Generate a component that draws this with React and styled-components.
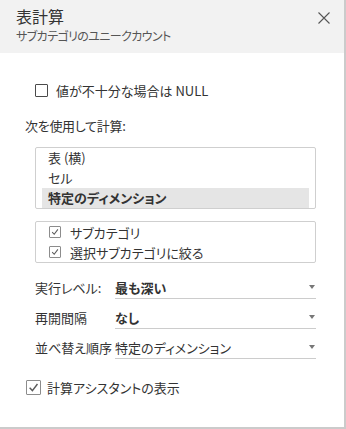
import { Fragment } from "react";
import styled, { createGlobalStyle } from "styled-components";

const GlobalStyle = createGlobalStyle`
  body {
    margin: 0;
    background: #fff;
    font-family: "Noto Sans CJK JP", "Noto Sans", sans-serif;
    font-feature-settings: "palt";
    color: #333;
  }
`;

const Panel = styled.div`
  width: 346px;
  height: 429px;
  box-sizing: border-box;
  border-right: 2px solid #cbcbcb;
  border-bottom: 2px solid #cbcbcb;
  background: #fff;
  display: flex;
  flex-direction: column;
`;

const Header = styled.header`
  height: 53px;
  box-sizing: border-box;
  background: #f2f2f2;
  padding: 5px 14px 0 16px;
  display: flex;
  justify-content: space-between;
  align-items: flex-start;
`;

const Title = styled.h1`
  margin: 0;
  font-size: 16px;
  line-height: 22px;
  font-weight: 400;
  color: #333;
`;

const Subtitle = styled.div`
  font-size: 12px;
  line-height: 18px;
  letter-spacing: -0.6px;
  color: #555;
`;

const CloseButton = styled.button`
  border: 0;
  background: none;
  padding: 0;
  margin-top: 7px;
  width: 12px;
  height: 12px;
  display: flex;
  cursor: pointer;
`;

const Body = styled.div`
  padding: 27px 28px 0 25px;
  display: flex;
  flex-direction: column;
  font-size: 13px;
`;

const CheckRow = styled.label`
  display: flex;
  align-items: center;
  height: 20px;
  gap: ${(p) => p.$gap || 8}px;
  margin-left: ${(p) => p.$indent || 0}px;
  margin-top: ${(p) => p.$top || 0}px;
  white-space: nowrap;
`;

const Box = styled.span`
  width: ${(p) => p.$size}px;
  height: ${(p) => p.$size}px;
  box-sizing: border-box;
  border: 1px solid ${(p) => (p.$checked ? "#8c8c8c" : "#4a4a4a")};
  border-radius: 1px;
  background: #fff;
  display: flex;
  align-items: center;
  justify-content: center;
  flex: none;
`;

const SectionLabel = styled.div`
  height: 20px;
  line-height: 20px;
  margin-top: 16px;
  letter-spacing: -0.3px;
`;

const ListBox = styled.ul`
  list-style: none;
  margin: 11px 0 0 10px;
  padding: 0 6px;
  width: 281px;
  box-sizing: border-box;
  border: 1px solid #cfcfcf;
  border-radius: 2px;
`;

const ListItem = styled.li`
  height: 20px;
  line-height: 20px;
  padding-left: 6px;
  background: ${(p) => (p.$selected ? "#e5e5e5" : "transparent")};
  font-weight: ${(p) => (p.$selected ? 700 : 400)};
`;

const FieldBox = styled.div`
  margin: 12px 0 0 10px;
  width: 281px;
  box-sizing: border-box;
  border: 1px solid #cfcfcf;
  border-radius: 2px;
  padding-left: 13px;
`;

const OptionRows = styled.div`
  margin: 6px 0 0 10px;
  display: grid;
  grid-template-columns: 80px 201px;
  grid-auto-rows: 30px;
`;

const OptionLabel = styled.div`
  align-self: end;
  line-height: 20px;
  padding-bottom: 1px;
  white-space: nowrap;
`;

const Dropdown = styled.div`
  align-self: stretch;
  display: flex;
  align-items: flex-end;
  justify-content: space-between;
  border-bottom: 1px solid #cccccc;
  padding-right: 1px;
  font-weight: ${(p) => (p.$strong ? 700 : 400)};
`;

const DropdownValue = styled.span`
  line-height: 20px;
`;

const Caret = styled.span`
  width: 0;
  height: 0;
  border-left: 3px solid transparent;
  border-right: 3px solid transparent;
  border-top: 4px solid #777;
  margin-bottom: 9px;
`;

const Check = ({ size = 12 }) => (
  <svg width={size - 4} height={size - 4} viewBox="0 0 10 10">
    <path d="M1.5 5.2 L4 7.8 L8.6 1.8" fill="none" stroke="#5a5a5a" strokeWidth="1.3" />
  </svg>
);

const Checkbox = ({ checked, size = 12 }) => (
  <Box $size={size} $checked={checked}>
    {checked && <Check size={size} />}
  </Box>
);

const options = [
  { label: "実行レベル:", value: "最も深い", strong: true },
  { label: "再開間隔", value: "なし", strong: true },
  { label: "並べ替え順序", value: "特定のディメンション", strong: false },
];

const App = () => {
  const items = ["表 (横)", "セル", "特定のディメンション"];

  return (
    <>
      <GlobalStyle />
      <Panel>
        <Header>
          <div>
            <Title>表計算</Title>
            <Subtitle>サブカテゴリのユニークカウント</Subtitle>
          </div>
          <CloseButton aria-label="閉じる">
            <svg width="12" height="12" viewBox="0 0 12 12">
              <path d="M0.5 0.5 L11.5 11.5 M11.5 0.5 L0.5 11.5" stroke="#555" strokeWidth="1.1" />
            </svg>
          </CloseButton>
        </Header>
        <Body>
          <CheckRow $indent={10}>
            <Checkbox size={13} />
            値が不十分な場合は NULL
          </CheckRow>
          <SectionLabel>次を使用して計算:</SectionLabel>
          <ListBox>
            {items.map((item, i) => (
              <ListItem key={item} $selected={i === items.length - 1}>
                {item}
              </ListItem>
            ))}
          </ListBox>
          <FieldBox>
            <CheckRow $gap={9}>
              <Checkbox checked />
              サブカテゴリ
            </CheckRow>
            <CheckRow $gap={9}>
              <Checkbox checked />
              選択サブカテゴリに絞る
            </CheckRow>
          </FieldBox>
          <OptionRows>
            {options.map(({ label, value, strong }) => (
              <Fragment key={label}>
                <OptionLabel>{label}</OptionLabel>
                <Dropdown $strong={strong}>
                  <DropdownValue>{value}</DropdownValue>
                  <Caret />
                </Dropdown>
              </Fragment>
            ))}
          </OptionRows>
          <CheckRow $indent={1} $top={18} $gap={6}>
            <Checkbox checked size={15} />
            計算アシスタントの表示
          </CheckRow>
        </Body>
      </Panel>
    </>
  );
};

export default App;
